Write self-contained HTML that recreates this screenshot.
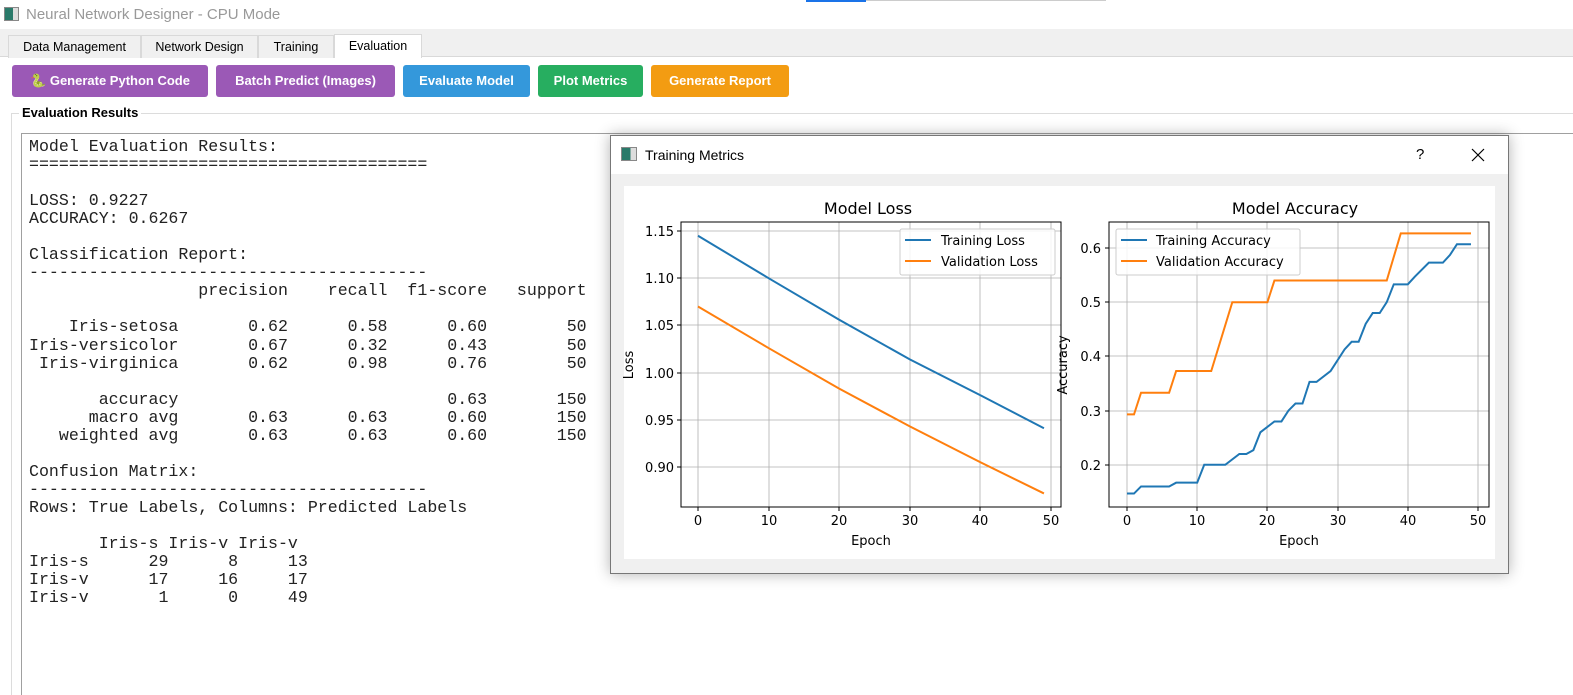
<!DOCTYPE html>
<html><head><meta charset="utf-8"><style>
*{margin:0;padding:0;box-sizing:border-box}
html,body{width:1573px;height:695px;overflow:hidden}
body{background:#fff;font-family:"Liberation Sans",sans-serif;position:relative}
.abs{position:absolute}
.tab{position:absolute;top:35px;height:23px;background:#f0f0f0;border:1px solid #d9d9d9;border-bottom:none;font-size:12.5px;color:#000;text-align:center;line-height:22px}
.btn{position:absolute;top:65px;height:32px;border-radius:3px;color:#fff;font-weight:bold;font-size:13px;text-align:center;line-height:32px}
pre{font-family:"Liberation Mono","Courier New",monospace;font-size:16.6px;line-height:18.05px;color:#222}
</style></head><body>
<div class="abs" style="left:0;top:0;width:1573px;height:29px;background:#fff"></div>
<div class="abs" style="left:806px;top:0;width:60px;height:2px;background:#1a73e8"></div>
<div class="abs" style="left:866px;top:0;width:240px;height:1px;background:#ccc"></div>
<div class="abs" style="left:4px;top:7px;width:15px;height:14px;border:1px solid #888;background:linear-gradient(90deg,#2a7a6a 0 60%,#ddd 60%)"></div>
<div class="abs" style="left:26px;top:6px;font-size:15px;color:#999">Neural Network Designer - CPU Mode</div>
<div class="abs" style="left:0;top:29px;width:1573px;height:28px;background:#f0f0f0;border-bottom:1px solid #d9d9d9"></div>
<div class="tab" style="left:8px;width:133px">Data Management</div>
<div class="tab" style="left:141px;width:117px">Network Design</div>
<div class="tab" style="left:258px;width:76px">Training</div>
<div class="tab" style="left:334px;top:34px;height:24px;width:88px;background:#fff">Evaluation</div>
<div class="btn" style="left:12px;width:196px;background:#9b59b6"><span style="color:#e8e040">🐍</span> Generate Python Code</div>
<div class="btn" style="left:216px;width:179px;background:#9b59b6">Batch Predict (Images)</div>
<div class="btn" style="left:403px;width:127px;background:#3498db">Evaluate Model</div>
<div class="btn" style="left:538px;width:105px;background:#27ae60">Plot Metrics</div>
<div class="btn" style="left:651px;width:138px;background:#f39c12">Generate Report</div>
<div class="abs" style="left:11px;top:113px;width:1562px;height:582px;border:1px solid #dcdcdc;border-right:none;border-bottom:none"></div>
<div class="abs" style="left:19px;top:105px;background:#fff;padding:0 3px;font-size:13px;font-weight:bold">Evaluation Results</div>
<div class="abs" style="left:21px;top:133px;width:1552px;height:562px;border:1px solid #a0a0a0;border-right:none;border-bottom:none;background:#fff"></div>
<pre class="abs" style="left:29px;top:138px">Model Evaluation Results:
========================================

LOSS: 0.9227
ACCURACY: 0.6267

Classification Report:
----------------------------------------
                 precision    recall  f1-score   support

    Iris-setosa       0.62      0.58      0.60        50
Iris-versicolor       0.67      0.32      0.43        50
 Iris-virginica       0.62      0.98      0.76        50

       accuracy                           0.63       150
      macro avg       0.63      0.63      0.60       150
   weighted avg       0.63      0.63      0.60       150

Confusion Matrix:
----------------------------------------
Rows: True Labels, Columns: Predicted Labels

       Iris-s Iris-v Iris-v
Iris-s      29      8     13
Iris-v      17     16     17
Iris-v       1      0     49</pre>
<div class="abs" style="left:610px;top:135px;width:899px;height:439px;background:#f0f0f0;border:1px solid #777;box-shadow:0 0 14px rgba(0,0,0,.3)"></div>
<div class="abs" style="left:611px;top:136px;width:897px;height:38px;background:#fff"></div>
<div class="abs" style="left:621px;top:147px;width:16px;height:14px;border:1px solid #888;background:linear-gradient(90deg,#2a7a6a 0 60%,#ddd 60%)"></div>
<div class="abs" style="left:645px;top:147px;font-size:14px;color:#000">Training Metrics</div>
<div class="abs" style="left:1416px;top:146px;font-size:15px">?</div>
<svg class="abs" style="left:1471px;top:148px" width="14" height="14"><path d="M1 1L13 13M13 1L1 13" stroke="#000" stroke-width="1.2"/></svg>
<svg class="abs" style="left:0;top:0" width="1573" height="695" font-family="DejaVu Sans,sans-serif">
<rect x="624" y="186" width="871" height="373" fill="#fff"/>
<g stroke="#b0b0b0" stroke-width="0.8">
<path d="M698 222V507M769 222V507M839 222V507M910 222V507M980 222V507M1051 222V507"/>
<path d="M681 231H1061M681 278H1061M681 325H1061M681 373H1061M681 420H1061M681 467H1061"/>
<path d="M1127 222V507M1197 222V507M1267 222V507M1338 222V507M1408 222V507M1478 222V507"/>
<path d="M1109 248H1489M1109 302H1489M1109 356H1489M1109 411H1489M1109 465H1489"/>
</g>
<rect x="681" y="222" width="380" height="285" fill="none" stroke="#000" stroke-width="1"/>
<rect x="1109" y="222" width="380" height="285" fill="none" stroke="#000" stroke-width="1"/>
<g stroke="#000"><path d="M698 507v4M769 507v4M839 507v4M910 507v4M980 507v4M1051 507v4M681 231h-4M681 278h-4M681 325h-4M681 373h-4M681 420h-4M681 467h-4"/>
<path d="M1127 507v4M1197 507v4M1267 507v4M1338 507v4M1408 507v4M1478 507v4M1109 248h-4M1109 302h-4M1109 356h-4M1109 411h-4M1109 465h-4"/></g>
<g font-size="13" fill="#000" text-anchor="end">
<text x="674" y="236">1.15</text><text x="674" y="283">1.10</text><text x="674" y="330">1.05</text><text x="674" y="378">1.00</text><text x="674" y="425">0.95</text><text x="674" y="472">0.90</text>
<text x="1101" y="253">0.6</text><text x="1101" y="307">0.5</text><text x="1101" y="361">0.4</text><text x="1101" y="416">0.3</text><text x="1101" y="470">0.2</text>
</g>
<g font-size="13" fill="#000" text-anchor="middle">
<text x="698" y="525">0</text><text x="769" y="525">10</text><text x="839" y="525">20</text><text x="910" y="525">30</text><text x="980" y="525">40</text><text x="1051" y="525">50</text>
<text x="1127" y="525">0</text><text x="1197" y="525">10</text><text x="1267" y="525">20</text><text x="1338" y="525">30</text><text x="1408" y="525">40</text><text x="1478" y="525">50</text>
<text x="871" y="545">Epoch</text><text x="1299" y="545">Epoch</text>
<text x="868" y="214" font-size="16">Model Loss</text><text x="1295" y="214" font-size="16">Model Accuracy</text>
<text transform="translate(633,365) rotate(-90)" font-size="13">Loss</text>
<text transform="translate(1067,365) rotate(-90)" font-size="13">Accuracy</text>
</g>
<g transform="translate(698,1316.6) scale(7.06,-944)" fill="none">
<polyline vector-effect="non-scaling-stroke" stroke-width="2" stroke="#1f77b4" points="0,1.145 10,1.100 20,1.056 30,1.014 40,0.976 49,0.941"/>
<polyline vector-effect="non-scaling-stroke" stroke-width="2" stroke="#ff7f0e" points="0,1.070 10,1.026 20,0.983 30,0.943 40,0.905 49,0.872"/>
</g>
<g transform="translate(1127,573.2) scale(7.02,-542)" fill="none">
<polyline vector-effect="non-scaling-stroke" stroke-width="2" stroke="#1f77b4" points="0,0.147 1,0.147 2,0.16 6,0.16 7,0.167 10,0.167 11,0.2 14,0.2 16,0.22 17,0.22 18,0.227 19,0.26 21,0.28 22,0.28 23,0.3 24,0.313 25,0.313 26,0.353 27,0.353 29,0.373 31,0.413 32,0.427 33,0.427 34,0.46 35,0.48 36,0.48 37,0.5 38,0.533 40,0.533 41,0.547 43,0.573 45,0.573 46,0.587 47,0.607 49,0.607"/>
<polyline vector-effect="non-scaling-stroke" stroke-width="2" stroke="#ff7f0e" points="0,0.293 1,0.293 2,0.333 6,0.333 7,0.373 12,0.373 15,0.5 20,0.5 21,0.54 37,0.54 39,0.627 49,0.627"/>
</g>
<rect x="900" y="229" width="155" height="46" rx="2" fill="#fff" fill-opacity=".85" stroke="#ccc"/>
<path d="M905 240h26" stroke="#1f77b4" stroke-width="2"/><path d="M905 261h26" stroke="#ff7f0e" stroke-width="2"/>
<text x="941" y="245" font-size="13">Training Loss</text><text x="941" y="266" font-size="13">Validation Loss</text>
<rect x="1116" y="229" width="184" height="46" rx="2" fill="#fff" fill-opacity=".85" stroke="#ccc"/>
<path d="M1121 240h26" stroke="#1f77b4" stroke-width="2"/><path d="M1121 261h26" stroke="#ff7f0e" stroke-width="2"/>
<text x="1156" y="245" font-size="13">Training Accuracy</text><text x="1156" y="266" font-size="13">Validation Accuracy</text>
</svg>
</body></html>
